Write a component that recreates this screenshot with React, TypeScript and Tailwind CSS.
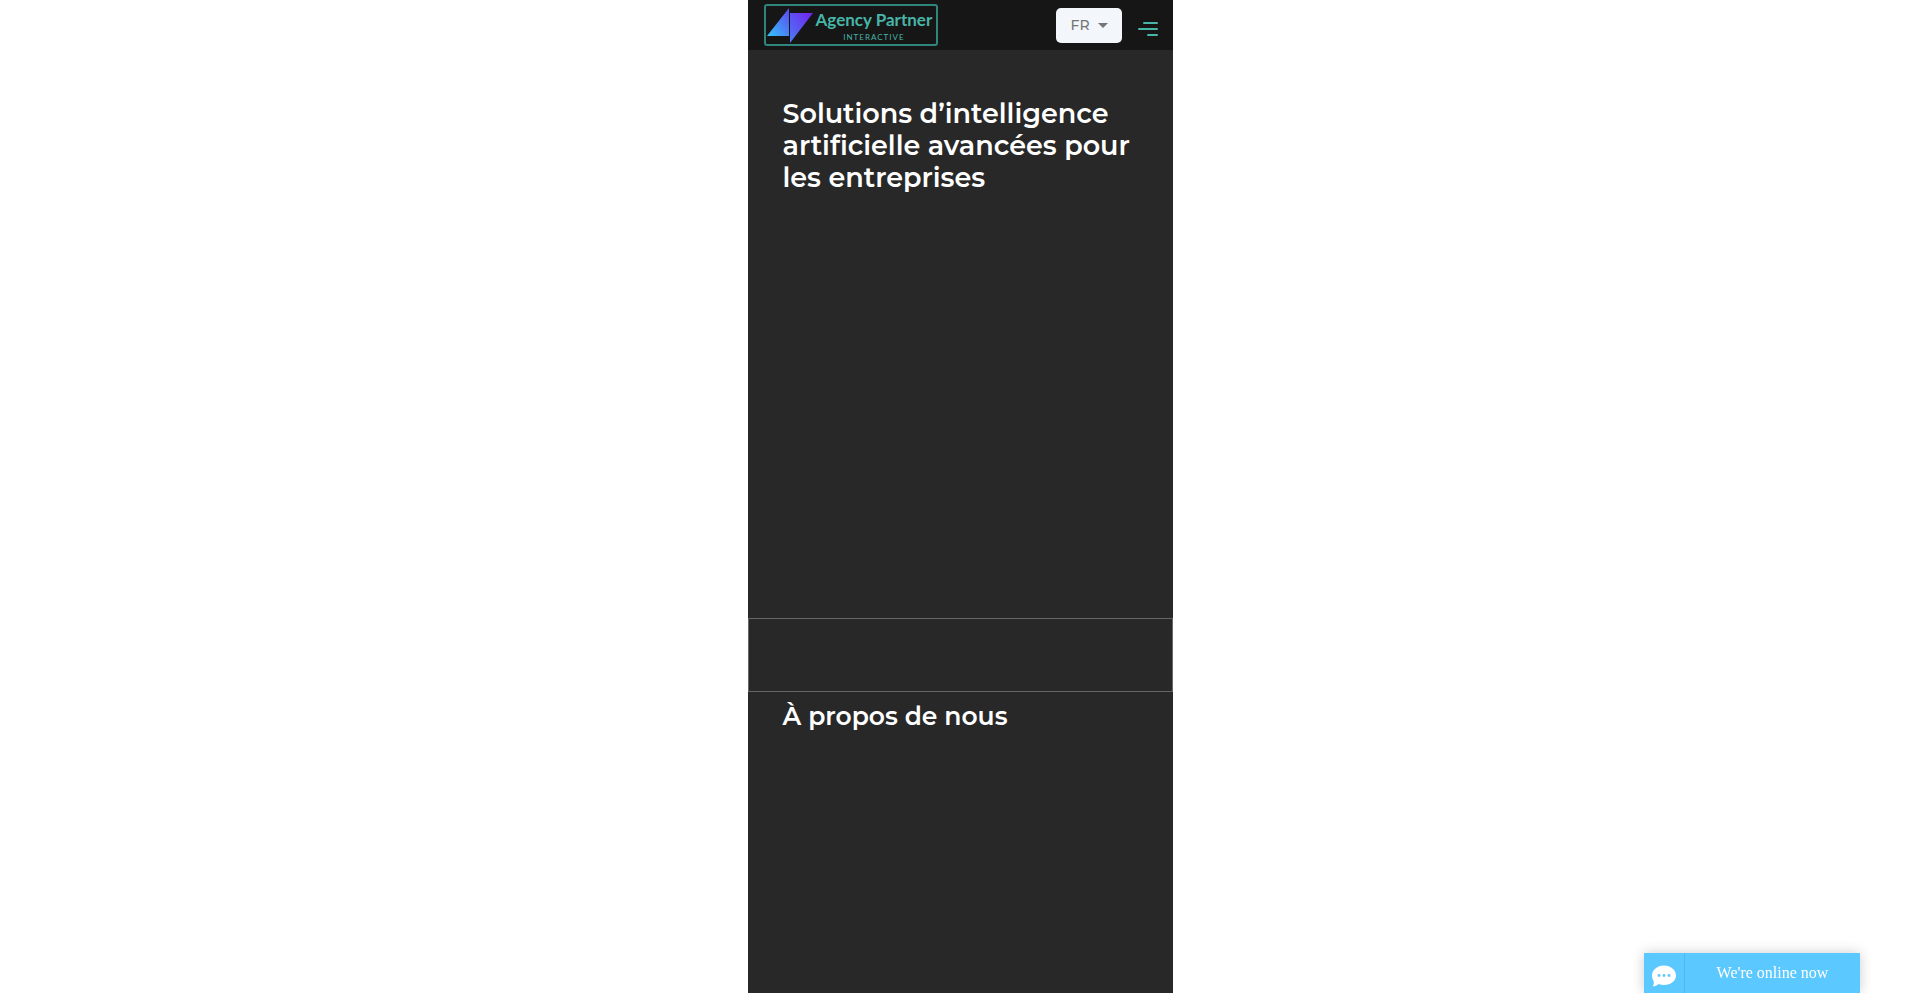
const languages = ["FR", "EN", "ES"];

function Logo() {
  return (
    <a
      href="#"
      className="flex h-[42px] w-[174px] items-center rounded-[3px] border-2 border-[#2f857c] text-[#47b5a7]"
    >
      <svg viewBox="0 0 48 38" className="h-[38px] w-12 shrink-0" aria-hidden="true">
        <defs>
          <linearGradient id="mark-left" x1="0" y1="1" x2="1" y2="0">
            <stop offset="0" stopColor="#35c4fb" />
            <stop offset="1" stopColor="#5b45ef" />
          </linearGradient>
          <linearGradient id="mark-right" x1="0" y1="1" x2="1" y2="0">
            <stop offset="0" stopColor="#4a7cf5" />
            <stop offset="1" stopColor="#7222ee" />
          </linearGradient>
        </defs>
        <path d="M1 30 L23 2 V30 Z" fill="url(#mark-left)" />
        <path d="M24 7 H47 L24 37 Z" fill="url(#mark-right)" />
      </svg>
      <span className="flex flex-col items-center whitespace-nowrap pl-[2px]">
        <span className="font-['Lato',sans-serif] text-[17px] font-bold leading-6">
          Agency Partner
        </span>
        <span className="font-['Lato',sans-serif] text-[8px] leading-[10px] tracking-[1px]">
          INTERACTIVE
        </span>
      </span>
    </a>
  );
}

function Header() {
  return (
    <header className="flex h-[50px] items-center bg-[#161616] pl-4 pr-[15px]">
      <Logo />
      <div className="relative ml-auto mr-4">
        <select
          aria-label="Langue"
          className="block h-[35px] w-[66px] appearance-none rounded-[5px] bg-[#f3f7fb] pl-[15px] text-[14px] font-medium text-[#757575]"
        >
          {languages.map((lang) => (
            <option key={lang}>{lang}</option>
          ))}
        </select>
        <svg
          viewBox="0 0 10 5"
          className="pointer-events-none absolute right-[14px] top-[15px] h-[5px] w-[10px]"
          aria-hidden="true"
        >
          <path d="M0 0 H10 L5 5 Z" fill="#757575" />
        </svg>
      </div>
      <button type="button" aria-label="Menu" className="flex flex-col items-end gap-1 pt-2">
        <span className="h-[2px] w-[15px] rounded-full bg-[#47b5a7]" />
        <span className="h-[2px] w-5 rounded-full bg-[#47b5a7]" />
        <span className="h-[2px] w-[11px] rounded-full bg-[#47b5a7]" />
      </button>
    </header>
  );
}

function ChatWidget() {
  return (
    <button
      type="button"
      className="fixed bottom-0 right-[60px] flex h-10 w-[216px] bg-[#5bc8ff] text-white shadow-[0_0_12px_rgba(0,0,0,0.2)]"
    >
      <span className="flex h-full w-[41px] items-center border-r border-[#50b8ef] pl-2 pt-[5px]">
        <svg viewBox="0 0 24 22" className="h-[22px] w-6" aria-hidden="true">
          <path
            d="M12 0.500 C18.600 0.500 24 4.900 24 10.500 C24 16 18.600 20 12 20 C10 20 8.300 19.700 6.700 19 C5 20.700 3 21.300 0.800 21.300 C1.800 19.500 2 17.800 1.600 16 C0.600 14.500 0 12.500 0 10.500 C0 4.900 5.400 0.500 12 0.500 Z"
            fill="#fff"
          />
          <circle cx="7" cy="10.500" r="1.400" fill="#5bc8ff" />
          <circle cx="12" cy="10.500" r="1.400" fill="#5bc8ff" />
          <circle cx="17" cy="10.500" r="1.400" fill="#5bc8ff" />
        </svg>
      </span>
      <span className="flex-1 font-['Liberation_Serif',serif] text-[16px] leading-10">
        We're online now
      </span>
    </button>
  );
}

export default function App() {
  return (
    <div className="min-h-screen bg-white font-['Montserrat','Inter',sans-serif]">
      <div className="mx-auto min-h-screen w-full max-w-[425px] bg-[#282828] text-white">
        <Header />
        <main>
          <section className="min-h-[568px] px-[35px] pt-12">
            <h1 className="text-[27px] font-semibold leading-8">
              Solutions d’intelligence artificielle avancées pour les entreprises
            </h1>
          </section>
          <div className="h-[74px] border border-[#666]" />
          <section className="px-[35px] pt-2">
            <h2 className="text-[25px] font-semibold leading-8">À propos de nous</h2>
          </section>
        </main>
      </div>
      <ChatWidget />
    </div>
  );
}
